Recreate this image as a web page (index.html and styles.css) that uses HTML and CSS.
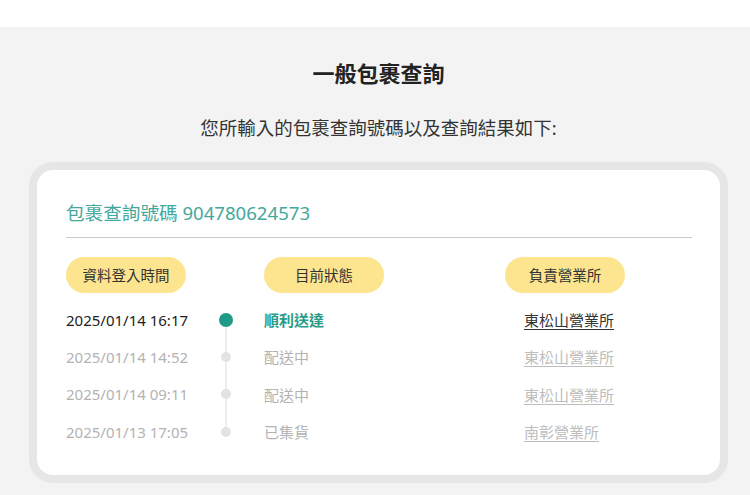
FILE: index.html
```html
<!DOCTYPE html>
<html lang="zh-Hant">
<head>
  <meta charset="UTF-8" />
  <meta name="viewport" content="width=device-width, initial-scale=1.0" />
  <title>一般包裹查詢</title>
  <link rel="stylesheet" href="styles.css">
</head>
<body>
  <div class="topbar"></div>
  <main class="main">
    <h1>一般包裹查詢</h1>
    <p class="intro">您所輸入的包裹查詢號碼以及查詢結果如下:</p>

    <section class="card">
      <div class="tracking">包裹查詢號碼 <span class="num">904780624573</span></div>

      <div class="row head">
        <span class="pill">資料登入時間</span>
        <span></span>
        <span class="pill">目前狀態</span>
        <span class="pill">負責營業所</span>
      </div>

      <div class="row current">
        <span class="time">2025/01/14 16:17</span>
        <span class="dot"></span>
        <span class="status">順利送達</span>
        <span class="office"><a href="#">東松山營業所</a></span>
      </div>
      <div class="row">
        <span class="time">2025/01/14 14:52</span>
        <span class="dot"></span>
        <span class="status">配送中</span>
        <span class="office"><a href="#">東松山營業所</a></span>
      </div>
      <div class="row">
        <span class="time">2025/01/14 09:11</span>
        <span class="dot"></span>
        <span class="status">配送中</span>
        <span class="office"><a href="#">東松山營業所</a></span>
      </div>
      <div class="row last">
        <span class="time">2025/01/13 17:05</span>
        <span class="dot"></span>
        <span class="status">已集貨</span>
        <span class="office"><a href="#">南彰營業所</a></span>
      </div>
    </section>
  </main>
</body>
</html>
```

FILE: styles.css
```css
body {
  font-family: "Noto Sans", "Noto Sans CJK TC", sans-serif;
  background: #f3f3f3;
  margin: 0;
  color: #333;
}
.topbar {
  height: 27px;
  background: #fff;
}
.main {
  padding: 31px 0 10px 7px;
  text-align: center;
}
h1 {
  margin: 0;
  font-size: 22px;
  line-height: 30px;
  font-weight: bold;
  color: #222;
}
.intro {
  margin: 27px 0 21px;
  font-size: 18.5px;
  line-height: 26px;
  color: #333;
}
.card {
  box-sizing: border-box;
  width: 699px;
  margin: 0 auto;
  padding: 30px 28px 25px 29px;
  background: #fff;
  border: 8px solid #e6e6e6;
  border-radius: 24px;
  text-align: left;
}
.tracking {
  font-size: 18.6px;
  line-height: 26px;
  color: #44a89c;
  padding-bottom: 11px;
  border-bottom: 1px solid #c9c9c9;
}
.row {
  display: grid;
  grid-template-columns: 122px 76px 241px 121px;
  align-items: center;
  height: 37.3px;
  font-size: 15px;
  color: #b3b3b3;
}
.row.head {
  height: 36px;
  margin: 19px 0 8px;
}
.pill {
  width: 120px;
  height: 36px;
  line-height: 36px;
  border-radius: 18px;
  background: #fde58f;
  color: #333;
  font-size: 14.5px;
  text-align: center;
}
.time {
  white-space: nowrap;
}
.office {
  padding-left: 19px;
  white-space: nowrap;
}
.office a {
  color: #bdbdbd;
  text-decoration: underline;
  text-underline-offset: 3px;
}
.dot {
  position: relative;
  height: 100%;
}
.dot::before {
  content: "";
  position: absolute;
  left: 37px;
  top: 0;
  bottom: 0;
  width: 2px;
  background: #eeeeee;
}
.dot::after {
  content: "";
  position: absolute;
  left: 33px;
  top: 50%;
  width: 10px;
  height: 10px;
  margin-top: -5px;
  border-radius: 50%;
  background: #e3e3e3;
}
.row.current .dot::before {
  top: 50%;
}
.row.last .dot::before {
  bottom: 50%;
}
.row.current .dot::after {
  left: 31px;
  width: 14px;
  height: 14px;
  margin-top: -7px;
  background: #1e9b87;
}
.row.current .time {
  color: #222;
}
.row.current .status {
  color: #2a9c88;
  font-weight: bold;
}
.row.current .office a {
  color: #333;
}
```
